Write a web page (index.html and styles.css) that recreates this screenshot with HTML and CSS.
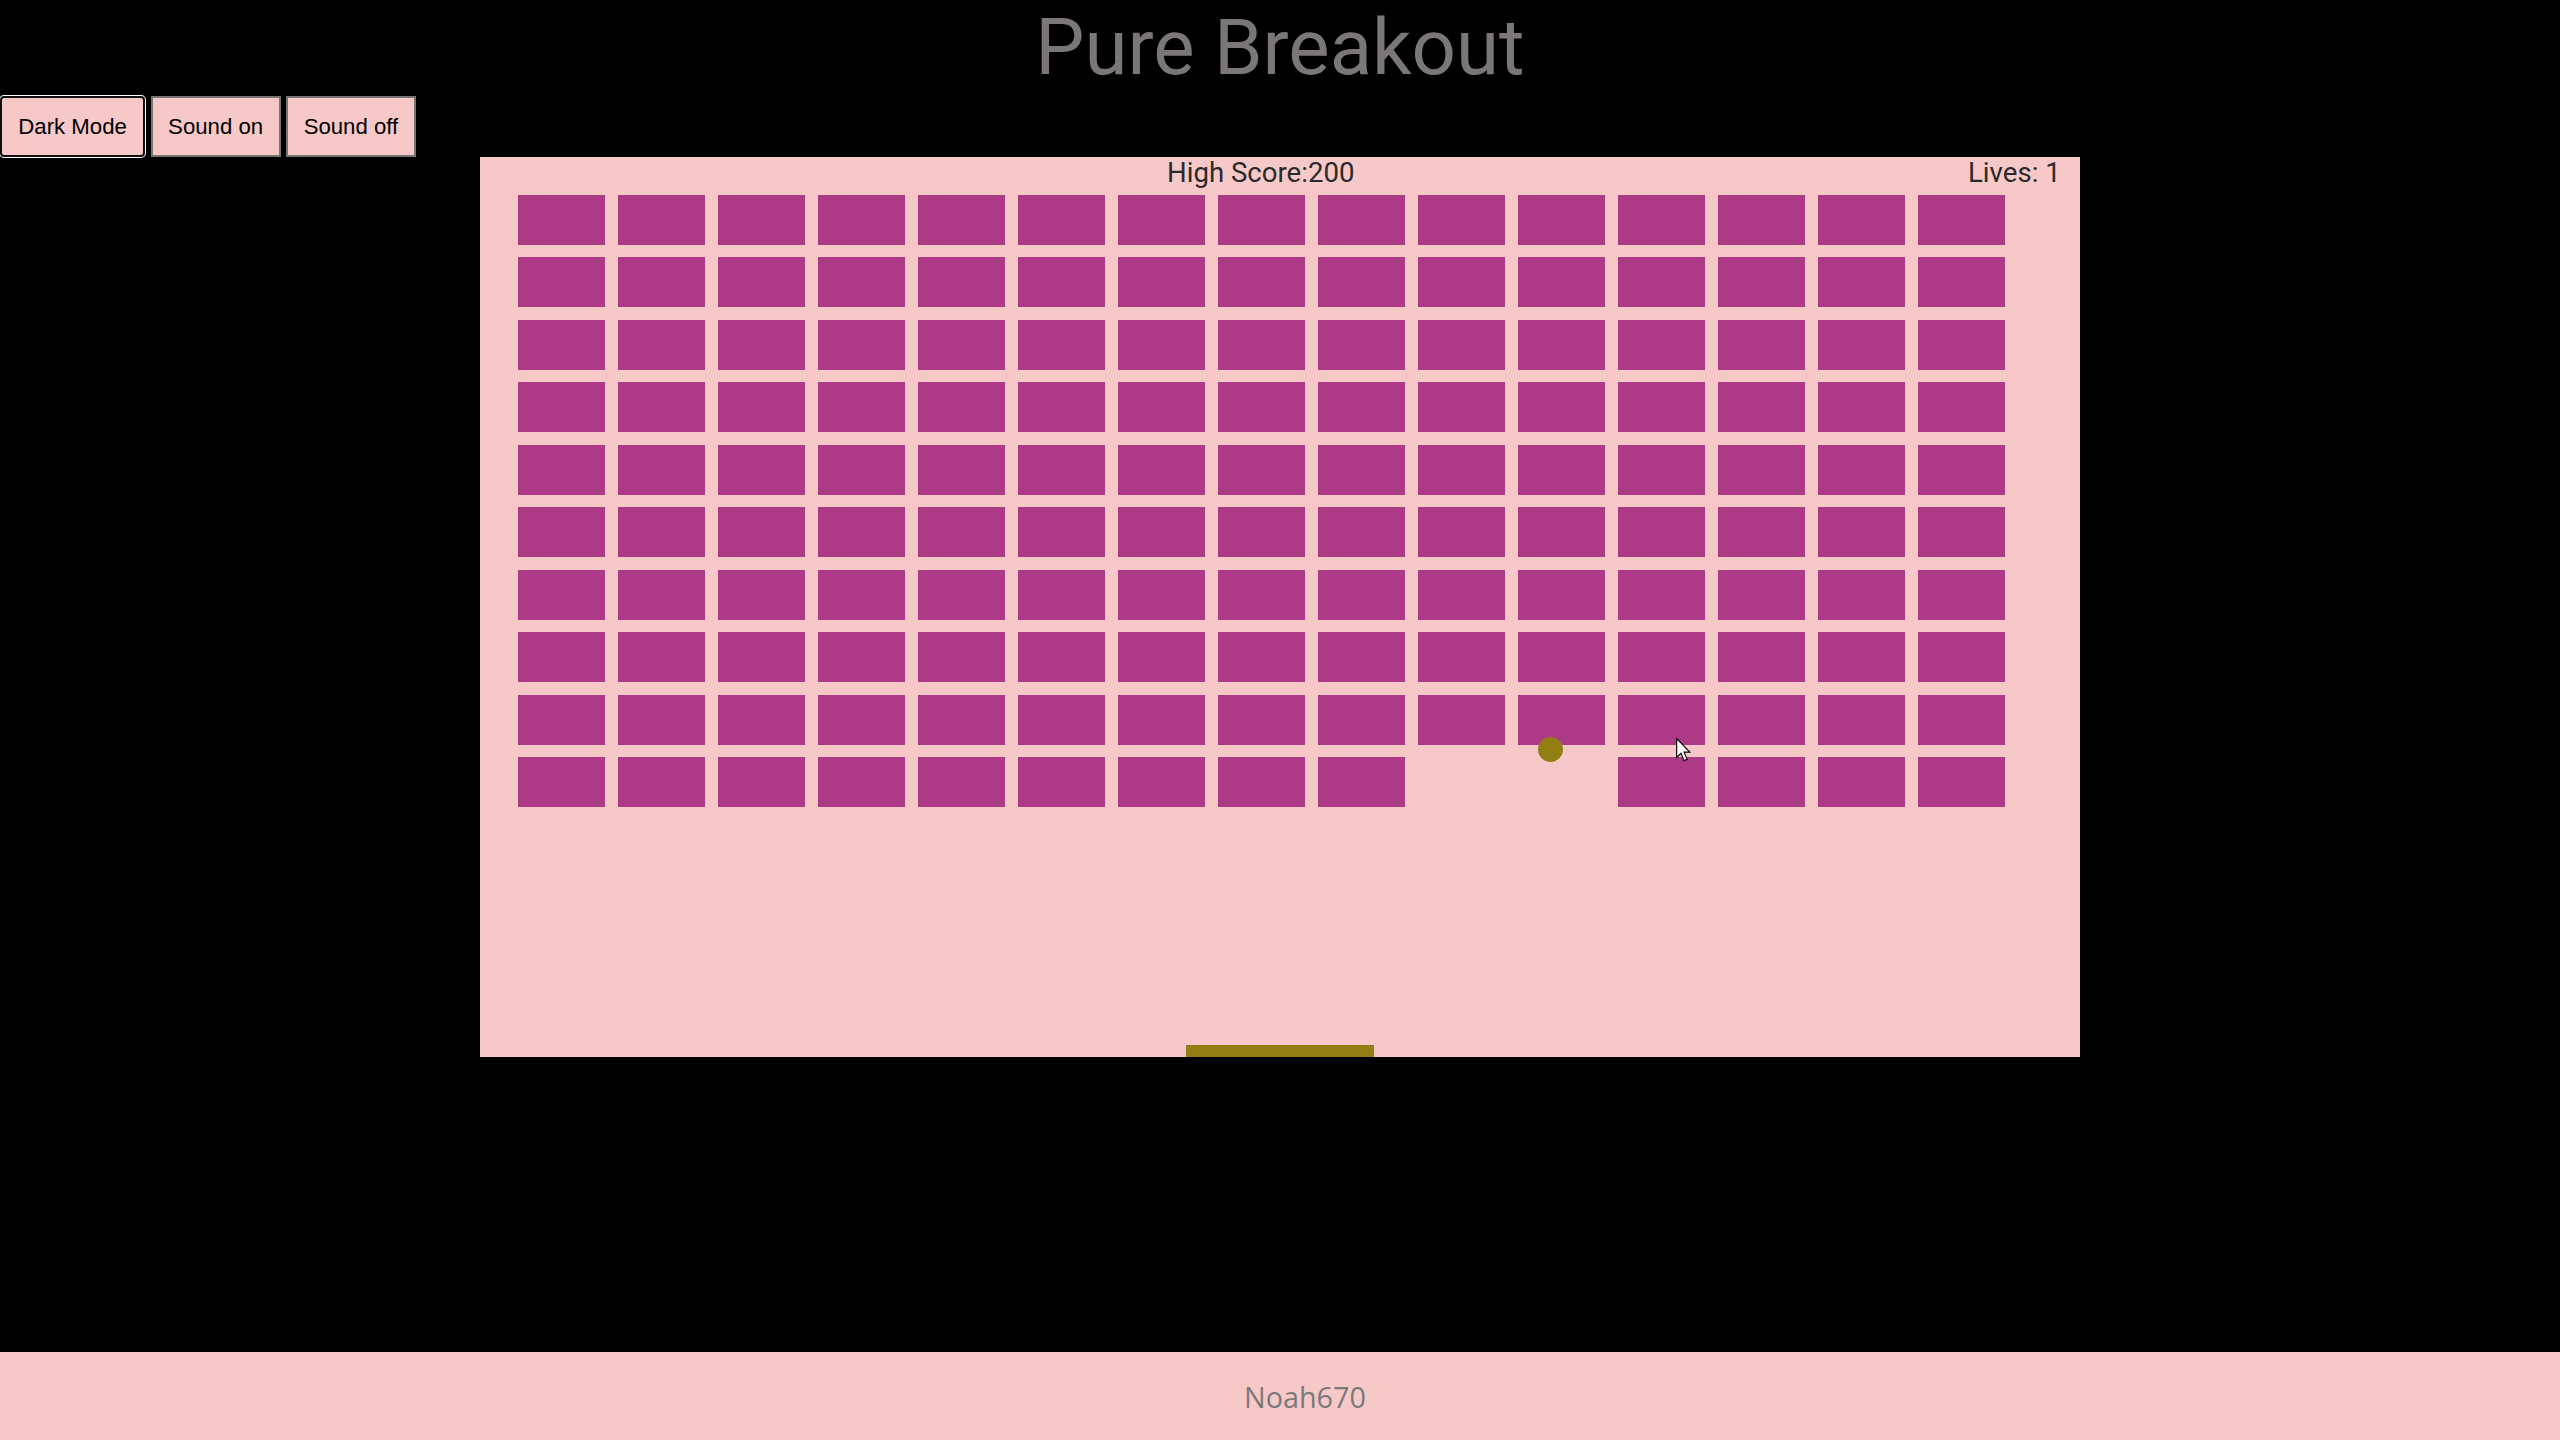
FILE: index.html
```html
<!DOCTYPE html>
<html lang="en">
<head>
<meta charset="utf-8">
<title>Pure Breakout</title>
<link rel="stylesheet" href="styles.css">
</head>
<body>
<h1 class="title">Pure Breakout</h1>
<div class="controls">
  <button class="btn btn-focus">Dark Mode</button>
  <button class="btn">Sound on</button>
  <button class="btn">Sound off</button>
</div>
<div class="game">
  <div class="hud-score">High Score:200</div>
  <div class="hud-lives">Lives: 1</div>
  <div class="bricks">
    <i></i><i></i><i></i><i></i><i></i><i></i><i></i><i></i><i></i><i></i><i></i><i></i><i></i><i></i><i></i>
    <i></i><i></i><i></i><i></i><i></i><i></i><i></i><i></i><i></i><i></i><i></i><i></i><i></i><i></i><i></i>
    <i></i><i></i><i></i><i></i><i></i><i></i><i></i><i></i><i></i><i></i><i></i><i></i><i></i><i></i><i></i>
    <i></i><i></i><i></i><i></i><i></i><i></i><i></i><i></i><i></i><i></i><i></i><i></i><i></i><i></i><i></i>
    <i></i><i></i><i></i><i></i><i></i><i></i><i></i><i></i><i></i><i></i><i></i><i></i><i></i><i></i><i></i>
    <i></i><i></i><i></i><i></i><i></i><i></i><i></i><i></i><i></i><i></i><i></i><i></i><i></i><i></i><i></i>
    <i></i><i></i><i></i><i></i><i></i><i></i><i></i><i></i><i></i><i></i><i></i><i></i><i></i><i></i><i></i>
    <i></i><i></i><i></i><i></i><i></i><i></i><i></i><i></i><i></i><i></i><i></i><i></i><i></i><i></i><i></i>
    <i></i><i></i><i></i><i></i><i></i><i></i><i></i><i></i><i></i><i></i><i></i><i></i><i></i><i></i><i></i>
    <i></i><i></i><i></i><i></i><i></i><i></i><i></i><i></i><i></i><i class="gone"></i><i class="gone"></i><i></i><i></i><i></i><i></i>
  </div>
  <div class="ball"></div>
  <div class="paddle"></div>
  <svg class="cursor" width="15" height="24" viewBox="0 0 13 21" aria-hidden="true">
    <path d="M0.5 0.5 L0.5 17 L4.3 13.4 L7 19.8 L9.6 18.7 L7 12.4 L12 12.4 Z" fill="#fff" stroke="#000" stroke-width="1" stroke-linejoin="miter"/>
  </svg>
</div>
<footer class="footer">Noah670</footer>
</body>
</html>
```
FILE: styles.css
```css
html, body {
  margin: 0;
  padding: 0;
}
body {
  background: #000;
  min-height: 100vh;
  display: flex;
  flex-direction: column;
  font-family: Roboto, "Liberation Sans", sans-serif;
}
.title {
  margin: 0;
  height: 96px;
  line-height: 96px;
  font-size: 78px;
  font-weight: 400;
  font-family: Roboto, sans-serif;
  color: #7c7777;
  text-align: center;
}
.controls {
  display: flex;
  gap: 5.5px;
  height: 61px;
}
.btn {
  font-family: "Liberation Sans", Arial, sans-serif;
  font-size: 22.2px;
  line-height: 25px;
  color: #000;
  background: #f7c8c8;
  border: 2px solid #767676;
  padding: 16px 15.5px;
  margin: 0;
  height: 61px;
  border-radius: 0;
}
.btn-focus {
  border-color: #101010;
  border-radius: 4px;
  box-shadow: 0 0 0 1px #fff;
  padding: 16px 16.3px;
}
.game {
  position: relative;
  width: 1600px;
  height: 900px;
  margin: 0 auto;
  background: #f7c8c8;
  overflow: hidden;
}
.hud-score, .hud-lives {
  position: absolute;
  top: 0;
  font-family: Roboto, sans-serif;
  font-size: 27.6px;
  line-height: 32px;
  color: #2a2a2a;
}
.hud-score {
  left: 687px;
}
.hud-lives {
  left: 1488px;
}
.bricks {
  display: grid;
  grid-template-columns: repeat(15, 87.5px);
  grid-auto-rows: 50px;
  gap: 12.5px;
  padding: 37.5px 0 0 37.5px;
}
.bricks i {
  display: block;
  background: #ad3a86;
}
.bricks i.gone {
  visibility: hidden;
}
.ball {
  position: absolute;
  left: 1057.5px;
  top: 580px;
  width: 25px;
  height: 25px;
  border-radius: 50%;
  background: #937e13;
}
.paddle {
  position: absolute;
  left: 706px;
  top: 887.5px;
  width: 187.5px;
  height: 12.5px;
  background: #937e13;
}
.cursor {
  position: absolute;
  left: 1196px;
  top: 581px;
}
.footer {
  margin-top: auto;
  height: 88px;
  background: #f7c8c8;
  display: flex;
  align-items: center;
  justify-content: center;
  padding-left: 50px;
  font-family: "Open Sans", sans-serif;
  font-size: 28.8px;
  color: #7a7a7a;
}
```
